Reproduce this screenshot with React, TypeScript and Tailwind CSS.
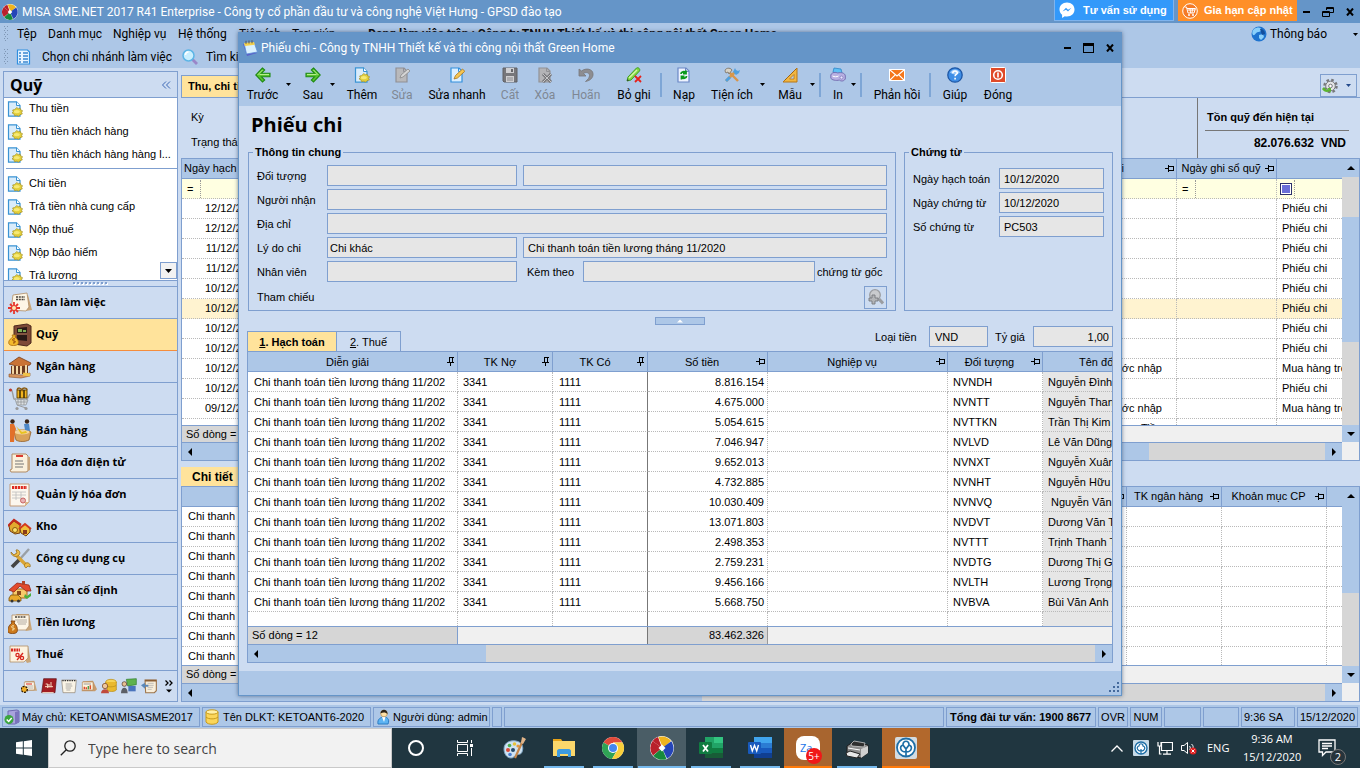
import React from "react";

const UI = "font-['Roboto','Noto_Sans',sans-serif]";
const HUMANIST = "font-['Open_Sans','Noto_Sans',sans-serif]";
const ARIAL = "font-['Liberation_Sans',Arial,sans-serif]";

/* ---------- small glyphs ---------- */

function MisaLogo({ className }: { className: string }) {
  return (
    <svg viewBox="0 0 24 24" className={className}>
      <circle cx="12" cy="12" r="12" fill="#fff" />
      <path d="M12 12 2.600 5A11.700 11.700 0 0 0 3 19.500Z" fill="#b9202b" />
      <path d="M12 12 2.600 5A11.700 11.700 0 0 1 8 1Z" fill="#b9202b" />
      <path d="M8.500 1A11.700 11.700 0 0 1 21 5L13 12Z" fill="#f0b41e" />
      <path d="M21.300 5.300A11.700 11.700 0 0 1 17 22.600L12 12Z" fill="#2545b8" />
      <path d="M16.500 22.900A11.700 11.700 0 0 1 3.200 19.800L12 12Z" fill="#178a3c" />
      <path d="m12 8.500 3.500 3.500-3.500 3.500L8.500 12Z" fill="#fff" />
    </svg>
  );
}

function DocCoin({ className = "size-4 shrink-0" }: { className?: string }) {
  return (
    <svg viewBox="0 0 16 16" className={className}>
      <path d="M1.500.8h8l3.500 3.700v10.700H1.500Z" fill="#d9ecfb" stroke="#3a93d3" strokeWidth="1.200" />
      <path d="M9.500.8v3.700H13" fill="#fff" stroke="#3a93d3" />
      <path d="m9.800 6.500 1.400 1.200 2-.5.5 1.700 1.900.8-1 1.600.7 1.600-2.300.8-1.500 1.500-1.700-.9-2.200.4-.5-1.700-2-1 1.200-1.500-.7-1.500 2.100-.5Z" fill="#e3cf3a" stroke="#a3902a" strokeWidth=".7" />
      <ellipse cx="9.800" cy="10.600" rx="3" ry="1.700" fill="#f6e976" />
    </svg>
  );
}

function PinSide() {
  return (
    <svg viewBox="0 0 9 8" className="h-2 w-[9px] shrink-0" fill="none" stroke="#000" shapeRendering="crispEdges">
      <path d="M0 3.500h3M3.500 0v7M3.500 1.500h5v4M3 5.500h6" />
    </svg>
  );
}

function PinDown() {
  return (
    <svg viewBox="0 0 8 9" className="h-[9px] w-2 shrink-0" fill="none" stroke="#000" shapeRendering="crispEdges">
      <path d="M2.500 0v5M2.500.5h4M5.500 0v5M0 5.500h7M3.500 5v4" />
    </svg>
  );
}

function Tri({ dir, className = "size-2" }: { dir: "up" | "down" | "left" | "right"; className?: string }) {
  const d = { up: "M0 6 4 2l4 4Z", down: "M0 2h8L4 6Z", left: "M6 0v8L2 4Z", right: "M2 0v8l4-4Z" }[dir];
  return (
    <svg viewBox="0 0 8 8" className={className} fill="currentColor">
      <path d={d} />
    </svg>
  );
}

const Close = ({ className = "size-2" }: { className?: string }) => (
  <svg viewBox="0 0 8 8" className={className} stroke="#000" strokeWidth="2">
    <path d="m1 0.500 6 7m0-7-6 7" />
  </svg>
);

/* ---------- navigation icons ---------- */

const paper = (
  <>
    <path d="m4 4 14-1 4 15-14 2H3Z" fill="#c9a679" />
    <path d="m3 4 14-1v15L3 19Z" fill="#fdf6e6" stroke="#b08d66" strokeWidth=".8" />
    <path d="M6 7h8M5.500 9.500h9M5.500 12h8" stroke="#6d6257" strokeDasharray="2 .8" />
  </>
);

const navIcons: Record<string, React.ReactNode> = {
  desk: (
    <>
      <path d="m7 3 13 1 4 15-6 1Z" fill="#c9a679" />
      <path d="m5 4 14-2 2 14-3 4L3 19Z" fill="#fdf6e6" stroke="#b08d66" strokeWidth=".8" />
      <path d="M8 6h9M8 8.500h9" stroke="#4a433c" strokeWidth="1.400" strokeDasharray="2 .8" />
      <g stroke="#e6342a" strokeWidth="1.800">
        <path d="M6 11v12M0 17h12M2 13l8 8m0-8-8 8" />
      </g>
      <circle cx="6" cy="17" r="2" fill="#ffe6b0" />
    </>
  ),
  safe: (
    <>
      <path d="m6 3 13-2 4 2v17l-4 3-13-2Z" fill="#7e4a37" stroke="#4c281c" />
      <path d="m9 5 10-1v14l-10-1Z" fill="#2a1a17" />
      <path d="m10 6 4 0v3h-4zM15 7h3v2h-3z" fill="#7fae55" />
      <path d="M9 11h10" stroke="#a06a50" strokeWidth="1.500" />
      <path d="M4 12h4l-1 2c3 2 4 5 3 7-1 2-8 2-9 0-1-3 1-5 4-7Z" fill="#f3b92c" stroke="#a96c10" strokeWidth=".8" />
      <path d="M7 16c-3-1-3 2-1 2s2 2-1 2" fill="none" stroke="#8a3c08" />
    </>
  ),
  bank: (
    <>
      <path d="M1 9 11 2l12 6-1 2-10 2Z" fill="#c97335" stroke="#7b3d16" strokeWidth=".8" />
      <path d="M3 11h17v8H3Z" fill="#6b3a20" />
      <path d="M5 11v8M9 11v8M13 11v8M18 10v8" stroke="#f4d9a5" strokeWidth="2" />
      <path d="m1 19 13 1 8-2v3l-9 2-12-1Z" fill="#d8955c" stroke="#8d5025" strokeWidth=".6" />
      <path d="m15 19 7 1" stroke="#f0c44a" strokeWidth="3" />
    </>
  ),
  cart: (
    <>
      <path d="M1 3c4-2 3 3 5 9l12 2 4-7" fill="none" stroke="#9c9c9c" strokeWidth="1.400" />
      <path d="M9 3h10v8H9Z" fill="#f2b51f" stroke="#6b4a06" />
      <path d="M12 3v8M16 3v8" stroke="#3b2b06" strokeWidth="1.500" />
      <path d="M9 3c1-3 4-2 5 0 1-3 5-2 5 0" fill="none" stroke="#8a5a10" strokeWidth="1.500" />
      <path d="m7 12 13 1-2 5H9Z" fill="#dde1e4" stroke="#8a8f94" strokeWidth=".7" />
      <path d="M10 12.500v5M13 12.500V18M16 13v5M8 15h11" stroke="#8a8f94" strokeWidth=".7" />
      <path d="m9 18 9 3" stroke="#9c9c9c" />
      <circle cx="9" cy="21.500" r="1.600" fill="#999" />
      <circle cx="18" cy="21.500" r="1.600" fill="#999" />
      <circle cx="2.500" cy="3" r="1.500" fill="#c0392b" />
    </>
  ),
  sell: (
    <>
      <path d="M6 13c4-3 12-3 17 0l-2 8c-4 2-10 2-13 0Z" fill="#d9a25a" stroke="#93602a" strokeWidth=".8" />
      <ellipse cx="14" cy="13" rx="7.500" ry="2.500" fill="#f4d59b" />
      <path d="m8 7 6 6 4-1 1 2-6 1Z" fill="#e8c21f" />
      <circle cx="4.500" cy="2.500" r="2.200" fill="#3a2417" />
      <path d="M2 5h4l2 5-1 3-1 10H2Z" fill="#e2702a" />
      <circle cx="19" cy="2.500" r="2.200" fill="#3a2417" />
      <path d="m16 5 5 0 1 7-5-1Z" fill="#4d87c7" />
    </>
  ),
  einvoice: (
    <>
      <path d="M4 3h14l2 2v15l-2 1H3l-1-2 2-1Z" fill="#fbf1dd" stroke="#b18a63" />
      <path d="M8 5h7" stroke="#d9261c" strokeWidth="1.800" />
      <path d="M7 10h8M7 13h9M7 16h8" stroke="#777" strokeWidth="1.200" />
      <path d="M20 6h2v13l-2 1Z" fill="#c9a57c" />
    </>
  ),
  invoice: (
    <>
      <path d="M2 1h19v18l-4 4H2Z" fill="#fcf7ee" stroke="#c49a77" />
      <path d="M4 4.500h15" stroke="#de2a20" strokeWidth="3" strokeDasharray="2.200 .7" />
      <path d="M4 9h14M4 12h14M4 15h9M8 9v8M13 9v8" stroke="#bdbdbd" strokeWidth=".8" />
      <circle cx="15" cy="17.500" r="2.500" fill="#e9b3b3" stroke="#c86363" />
      <path d="m17 23 4-4h-4Z" fill="#dcb98e" />
    </>
  ),
  store: (
    <>
      <path d="M1 11 6 6l6 4v8l-5 1-5-3Z" fill="#e2a92e" stroke="#77410f" />
      <path d="m0 11 6-6 7 5" fill="none" stroke="#c12c1d" strokeWidth="2.200" />
      <path d="m12 14 5-5 5 5v3l-4 4-5-3Z" fill="#efc03c" stroke="#77410f" />
      <path d="m11 14 6-5 6 5" fill="none" stroke="#d33a20" strokeWidth="2" />
      <circle cx="7" cy="15" r="2.500" fill="#fbe06a" stroke="#8a5b10" />
      <path d="M15 15h4v4h-4Z" fill="#8a3d18" />
    </>
  ),
  tools: (
    <>
      <path d="m4 20 8-8" stroke="#444" strokeWidth="3.800" />
      <path d="m12 12 9-10" stroke="#9aa0a6" strokeWidth="2.400" />
      <path d="m7 7 12 12" stroke="#d9a537" strokeWidth="3.400" />
      <path d="m3 5 3 3 3-2-1-3c3-1 5 3 3 5-3 3-8 1-8-3ZM18 16c3-1 5 2 4 4l-2-1-2 2c-2-1-2-4 0-5Z" fill="#f0bd48" stroke="#8d6414" strokeWidth=".7" />
    </>
  ),
  house: (
    <>
      <path d="M5 10h14v9H5Z" fill="#f7c96a" stroke="#a8691d" />
      <path d="m1 11 8-7 12 2 2 6-5 0-6-5-6 6Z" fill="#e34b2c" stroke="#96281a" strokeWidth=".8" />
      <path d="M14 2h3v4h-3Z" fill="#b54427" />
      <path d="M9 12h4v4H9Z" fill="#8c4a1c" />
      <path d="m1 19 2-3h7l3 3v3H1Z" fill="#e9a92c" stroke="#7b5410" strokeWidth=".8" />
      <circle cx="4" cy="22" r="1.500" fill="#333" />
      <circle cx="10.500" cy="22" r="1.500" fill="#333" />
      <path d="m17 15 2 2 4-3v3l-4 3-3-2Z" fill="#4cae3f" />
    </>
  ),
  salary: (
    <>
      <path d="m8 3 13 0 3 16-6 1Z" fill="#c9a679" />
      <path d="M4 4h17v11l-3 4H4Z" fill="#fdf6e6" stroke="#b08d66" strokeWidth=".8" />
      <path d="M7 6h11" stroke="#4a433c" strokeWidth="1.400" strokeDasharray="2 .8" />
      <path d="M7 9h12M9 11h10M10 13h8" stroke="#b3aca3" />
      <path d="M3 10h4l-1 2c3 2 4 6 3 9-1 2-8 2-9 0-1-3 1-7 4-9Z" fill="#cc7a1d" stroke="#7a3e09" strokeWidth=".8" />
      <path d="M6 15c-3-1-3 2-1 2s2 2-1 2" fill="none" stroke="#fff0b8" />
    </>
  ),
  tax: (
    <>
      <path d="M8 3h12l3 16-4 1Z" fill="#c9a679" />
      <path d="M2 3h18l0 12-4 4H2Z" fill="#fdf3e0" stroke="#b08d66" strokeWidth=".8" />
      <path d="M3 7h9" stroke="#d8261e" strokeWidth="2.800" strokeDasharray="2 .7" />
      <circle cx="9.500" cy="12" r="1.600" fill="none" stroke="#d8261e" strokeWidth="1.300" />
      <circle cx="14" cy="15" r="1.600" fill="none" stroke="#d8261e" strokeWidth="1.300" />
      <path d="m9 17 6-7" stroke="#d8261e" strokeWidth="1.300" />
    </>
  ),
};

const navItems: [string, string][] = [
  ["desk", "Bàn làm việc"],
  ["safe", "Quỹ"],
  ["bank", "Ngân hàng"],
  ["cart", "Mua hàng"],
  ["sell", "Bán hàng"],
  ["einvoice", "Hóa đơn điện tử"],
  ["invoice", "Quản lý hóa đơn"],
  ["store", "Kho"],
  ["tools", "Công cụ dụng cụ"],
  ["house", "Tài sản cố định"],
  ["salary", "Tiền lương"],
  ["tax", "Thuế"],
];

const trayIcons: [string, React.ReactNode][] = [
  ["Giá thành", <g key="a"><path d="m6 5 14-1 4 15H6Z" fill="#c9a679" /><path d="M5 6h15v12H5Z" fill="#fdf6e6" stroke="#b08d66" /><path d="M8 9h9" stroke="#d8261e" strokeWidth="2" strokeDasharray="2 1" /><path d="M9 12h9M10 15h8" stroke="#999" /><circle cx="5" cy="17" r="4.500" fill="#f3b029" stroke="#2b1a05" strokeWidth="2" strokeDasharray="3 1.500" /></g>],
  ["Tổng hợp", <g key="b"><path d="m4 1 19 0-2 21H1Z" fill="#a31d22" stroke="#5d0d12" /><path d="M6 13h12M7 9h3v6M12 9v5M15 6v8" stroke="#f6d9c0" strokeWidth="1.500" fill="none" /><path d="M2 22h17" stroke="#f7e6d1" strokeWidth="1.500" /></g>],
  ["Ngân sách", <g key="c"><path d="M1 3h22l-2 19H3Z" fill="#faf4e6" stroke="#8c8170" /><path d="M2 4h20" stroke="#333" strokeDasharray="2 1.500" strokeWidth="2" /><path d="M7 9h9M7 12h10M7 15h8M8 18h6" stroke="#8b8b8b" /></g>],
  ["Báo cáo", <g key="d"><path d="m3 5 15-1 6 13-3 3H1Z" fill="#c79a6c" /><path d="M2 6h16v12H2Z" fill="#fff4df" stroke="#b28d61" /><path d="M4 9h11" stroke="#999" strokeWidth="1.500" /><path d="M5 17v-4M8 17v-3M14 17v-6" stroke="#dd4a2a" strokeWidth="2.200" /><path d="M11 17v-5" stroke="#4fa04a" strokeWidth="2.200" /></g>],
  ["Tiền mặt", <g key="e"><ellipse cx="15" cy="6" rx="8" ry="4" fill="#f6d456" stroke="#b58914" /><path d="M7 6v5c3 3 12 3 16 0V6M9 13v5c3 3 11 3 14 0v-7" fill="#eab92e" stroke="#b58914" /><circle cx="6" cy="12" r="4" fill="#efc79b" stroke="#6b3918" /><path d="M0 23c0-8 12-8 12 0Z" fill="#c04a3c" /></g>],
  ["Khách hàng", <g key="f"><path d="m8 2 15-1v9l-13 2Z" fill="#5fb24d" stroke="#2d7b2c" /><path d="M11 12h11v8H11Z" fill="#4a74bd" /><circle cx="5" cy="9" r="3.500" fill="#e9bf93" stroke="#4b3120" /><path d="M0 23c0-11 10-11 10 0Z" fill="#5c5f66" /></g>],
  ["Kho vật tư", <g key="g"><path d="M6 3h17v16l-3 3H7Z" fill="#f8eedb" stroke="#9c7348" strokeWidth="1.600" /><path d="M10 8h9M10 11h9M10 14h8M10 17h6" stroke="#a7a7a7" /><path d="M6 4h17" stroke="#8b5f35" strokeWidth="2.500" /><path d="m0 11 6-4v3h5v3H6v3Z" fill="#5b87b8" /></g>],
];

/* ---------- dialog toolbar icons (16 x 16) ---------- */

const leftArrow = (
  <>
    <path d="M7.500 1 .8 8l6.700 7 2.200-2L6.500 9.800H15V6.200H6.500L9.700 3Z" fill="#59c42e" stroke="#1f8a14" strokeWidth="1.100" />
    <path d="M2.600 8 7.500 3M4.500 7.500h9.500" fill="none" stroke="#b6ee8c" />
  </>
);
const docBase = (fill: string, stroke: string) => (
  <>
    <path d="M2 1h8l3 3v11H2Z" fill={fill} stroke={stroke} strokeWidth="1.200" />
    <path d="M9.500 1v3.500H13" fill="none" stroke={stroke} />
  </>
);

const tbIcons: Record<string, React.ReactNode> = {
  prev: leftArrow,
  next: <g transform="matrix(-1 0 0 1 16 0)">{leftArrow}</g>,
  edit: <>{docBase("#b9b9bb", "#909096")}<path d="m6 11 1-3 7-6 2 2-7 6Z" fill="#d5d5d5" stroke="#8a8a8a" strokeWidth=".8" /></>,
  quick: <>{docBase("#dcefff", "#3390dd")}<path d="m5 12 1.500-3.500 7-6.500 2.300 2.300L8.500 11Z" fill="#f6c653" stroke="#a8731a" strokeWidth=".8" /></>,
  save: <><path d="M1 1h14v14H2l-1-1Z" fill="#77777b" stroke="#606064" /><path d="M4 1h8v5H4ZM4 9h8v6H4Z" fill="#cfcfd2" /><path d="M9 2h2v3H9Z" fill="#66666a" /><path d="M5 11h6M5 13h6" stroke="#8a8a8e" /></>,
  del: <>{docBase("#b4b4b7", "#929296")}<path d="m6 7 8 8m0-8-8 8" stroke="#77777b" strokeWidth="3" /><path d="m6 7 8 8m0-8-8 8" stroke="#c6c6c8" /></>,
  undo: <path d="M1 2v7h7L5.500 6.500c3-2 6-.5 6 2 0 2-1.500 4-4 6 5-1 8-4 7.500-8C14.500 2 8 .5 3.500 4Z" fill="#8d8d91" stroke="#77777b" strokeWidth=".8" />,
  unpost: <><path d="m1 14 1-4 8.500-9c2-1 4 1 3 3L5 13Z" fill="#83d840" stroke="#3d9e20" /><path d="m3 11 8-8" stroke="#d5f5a8" strokeWidth="1.500" /><path d="m1 14 .6-2L3 13.500Z" fill="#333" /><path d="m9 9 6 6m0-6-6 6" stroke="#e6201b" strokeWidth="1.800" /></>,
  load: <>{docBase("#eef3ff", "#6b87c6")}<path d="M5 7c0-2.500 3.500-3 5-1.200M10 3.500V6.500H7M10.500 9c0 2.500-3.500 3-5 1.200M5.500 12.500v-3h3" fill="none" stroke="#0a9a1d" strokeWidth="1.800" /></>,
  util: <><path d="m2 14 9-9" stroke="#d89b4a" strokeWidth="2.600" /><path d="m9 5 2-4 1 2 2 1 2-1-1 3-3 2Z" fill="#4fa0e0" /><path d="m5 5 9 9" stroke="#d8954a" strokeWidth="2.400" /><path d="M1 4c0-3 5-4 7-1l-3 4-1-2-2 1Z" fill="#d9d3c6" stroke="#877f72" /><path d="m1 13 4-4 2 2-4 4Z" fill="#4fa0e0" /></>,
  form: <><path d="M15 1v14H1Z" fill="#f2b640" stroke="#b77616" /><path d="M12 7.500V12H7.500Z" fill="#b9d0ea" stroke="#b77616" strokeWidth=".8" /><path d="m3 13 11-11" stroke="#8b560d" strokeDasharray="1 1" /></>,
  print: <><path d="m3 5 1-4 7 1 1 4-4 2Z" fill="#5fc0f4" stroke="#2f86c9" strokeWidth=".8" /><path d="M.8 8c1-3 5-3 7-2 3-1 7.500 0 7.500 3v3c-2 3-5 2-6 1-3 1-8 0-8.500-2Z" fill="#b8b0e2" stroke="#7169ae" strokeWidth=".9" /><path d="M2.500 9c2 1 4 1 6 0" stroke="#fff" fill="none" /><circle cx="11.500" cy="10.500" r="1.500" fill="#e9e6ff" stroke="#7169ae" strokeWidth=".6" /></>,
  mail: <><path d="M0 2h16v12H0Z" fill="#fff" /><path d="M1 3h14v10H1Z" fill="#f4761b" /><path d="m1 3 7 6 7-6M1 13l5.500-5.300M15 13 9.500 7.700" fill="none" stroke="#fff" strokeWidth="1.100" /></>,
  help: <><circle cx="8" cy="8" r="7.200" fill="#3f8ee6" stroke="#1d57a6" strokeWidth="1.300" /><path d="M3 5.500C5 1.500 11 1.500 13 5.500 10 8 6 8 3 5.500Z" fill="#9cc9fa" /><path d="M5.800 6.200c0-3 4.700-2.800 4.500-.2-.1 1.500-2.100 1.500-2.200 3.200M8.100 10.800v1.700" fill="none" stroke="#fff" strokeWidth="1.600" /></>,
  exit: <><rect x=".5" y=".5" width="15" height="15" rx="1" fill="#e04a28" stroke="#fff" /><circle cx="8" cy="8" r="4.300" fill="none" stroke="#fff" strokeWidth="1.600" /><path d="M8 5.500v5" stroke="#fff" strokeWidth="1.600" /></>,
};

type Tool = { w: string; icon: string; label: string; off?: boolean };

function ToolButton({ w, icon, label, off }: Tool) {
  return (
    <button type="button" disabled={off} className={`flex shrink-0 flex-col items-center gap-1 ${w} ${off ? "text-[#7f8794]" : "text-black"}`}>
      {icon === "add" ? <DocCoin /> : <svg viewBox="0 0 16 16" className="size-4">{tbIcons[icon]}</svg>}
      <span className="text-[12px] leading-4 whitespace-nowrap">{label}</span>
    </button>
  );
}

const ToolArrow = ({ className = "" }: { className?: string }) => (
  <button type="button" aria-label="Mở rộng" className={`w-[5px] shrink-0 ${className}`}>
    <svg viewBox="0 0 5 3" className="h-[3px] w-[5px]"><path d="M0 0h5L2.500 3Z" /></svg>
  </button>
);
const ToolSep = ({ className = "" }: { className?: string }) => <span className={`h-6 w-0.5 shrink-0 bg-[#7ea6d6] ${className}`} />;

/* ---------- scroll bars ---------- */

function HScroll({ thumb }: { thumb: string }) {
  return (
    <div className="flex h-[18px] shrink-0 items-stretch border-t border-[#7f9fcf] bg-[#d6d6d6]">
      <div className={`flex shrink-0 items-center bg-[#adc7e7] pl-1 ${thumb}`}><Tri dir="left" /></div>
      <div className="flex-1" />
      <div className="flex w-[17px] items-center justify-center bg-[#adc7e7]"><Tri dir="right" /></div>
    </div>
  );
}

function VScroll({ children }: { children: React.ReactNode }) {
  return (
    <div className="flex w-[17px] shrink-0 flex-col bg-[#d6d6d6]">
      <div className="flex h-[18px] shrink-0 items-center justify-center bg-[#adc7e7]"><Tri dir="up" /></div>
      {children}
      <div className="flex-1" />
      <div className="flex h-[17px] shrink-0 items-center justify-center bg-[#adc7e7]"><Tri dir="down" /></div>
      <div className="h-[18px] shrink-0 bg-[#f0f0f0]" />
    </div>
  );
}

/* ---------- tables ---------- */

const th = "h-5 overflow-hidden border-r border-b border-[#7f9fcf] bg-[#adc7e7] p-0 font-normal whitespace-nowrap";
const td = "h-5 overflow-hidden border-r border-b border-dotted border-[#b9b9b9] p-0 whitespace-nowrap";

function Head({ children, pin, className = "" }: { children?: React.ReactNode; pin?: "side" | "down"; className?: string }) {
  return (
    <th className={`${th} ${className}`}>
      <div className="flex items-center pr-0.5">
        <span className="flex-1 overflow-hidden text-center">{children}</span>
        {pin === "side" && <PinSide />}
        {pin === "down" && <PinDown />}
      </div>
    </th>
  );
}

const voucherRows: [string, string, string][] = [
  ["12/12/2020", "", "Phiếu chi"],
  ["12/12/2020", "", "Phiếu chi"],
  ["11/12/2020", "", "Phiếu chi"],
  ["11/12/2020", "", "Phiếu chi"],
  ["10/12/2020", "", "Phiếu chi"],
  ["10/12/2020", "", "Phiếu chi"],
  ["10/12/2020", "", "Phiếu chi"],
  ["10/12/2020", "", "Phiếu chi"],
  ["10/12/2020", "Mua hàng trong nước nhập", "Mua hàng trong nước"],
  ["10/12/2020", "", "Phiếu chi"],
  ["09/12/2020", "Mua hàng trong nước nhập", "Mua hàng trong nước"],
  ["", "Tiền", ""],
];

const lines: [string, string, string][] = [
  ["8.816.154", "NVNDH", "Nguyễn Đình"],
  ["4.675.000", "NVNTT", "Nguyễn Thanh"],
  ["5.054.615", "NVTTKN", "Trần Thị Kim"],
  ["7.046.947", "NVLVD", "Lê Văn Dũng"],
  ["9.652.013", "NVNXT", "Nguyễn Xuân"],
  ["4.732.885", "NVNHT", "Nguyễn Hữu"],
  ["10.030.409", "NVNVQ", "\u00a0Nguyễn Văn"],
  ["13.071.803", "NVDVT", "Dương Văn T"],
  ["2.498.353", "NVTTT", "Trịnh Thanh T"],
  ["2.759.231", "NVDTG", "Dương Thị Gi"],
  ["9.456.166", "NVLTH", "Lương Trọng"],
  ["5.668.750", "NVBVA", "Bùi Văn Anh"],
];

/* ---------- main window ---------- */

function TitleBar() {
  return (
    <header className="flex h-[23px] shrink-0 items-center bg-[#6595c8] pl-0.5 text-white">
      <MisaLogo className="size-4" />
      <h1 className="ml-1 flex-1 text-[12px] leading-4 whitespace-nowrap">
        MISA SME.NET 2017 R41 Enterprise - Công ty cổ phần đầu tư và công nghệ Việt Hưng - GPSD đào tạo
      </h1>
      <div className={`flex h-full items-start gap-1 text-[11px] font-bold ${ARIAL}`}>
        <button type="button" className="flex h-[21px] w-[120px] items-center gap-2 border border-t-0 border-[#7fb4ee] bg-[#3399fa] pl-1 whitespace-nowrap">
          <svg viewBox="0 0 16 16" className="size-4">
            <path d="M8 .5C3.500.500.500 3.700.500 7.500c0 2.200 1 4 2.600 5.300V16l2.700-1.700c.7.200 1.400.2 2.200.2 4.500 0 7.500-3.200 7.500-7S12.500.5 8 .5Z" fill="#fff" />
            <path d="m3.500 9.500 3.500-3.700 2 1.900 3.500-1.900L9 9.500 7 7.700Z" fill="#3399fa" />
          </svg>
          Tư vấn sử dụng
        </button>
        <button type="button" className="flex h-[21px] w-[119px] items-center gap-1.5 bg-[#ff8f28] pl-1 whitespace-nowrap">
          <svg viewBox="0 0 16 16" className="size-4">
            <circle cx="8" cy="8" r="7.300" fill="#f47a26" stroke="#fff" />
            <path d="M2.500 4h2l1.500 6h6l1.500-4.500H5M6 7h7M8 5.500l.5 4.500M10.500 5.500 10 10" fill="none" stroke="#fff" />
            <circle cx="7" cy="12" r="1" fill="#fff" /><circle cx="11" cy="12" r="1" fill="#fff" />
          </svg>
          Gia hạn cập nhật
        </button>
      </div>
      <div className="flex items-center gap-3 pr-1.5 pl-1.5">
        <button type="button" aria-label="Thu nhỏ" className="h-0.5 w-[7px] bg-black" />
        <button type="button" aria-label="Khôi phục">
          <svg viewBox="0 0 12 10" className="h-2.5 w-3" fill="none" stroke="#000"><path d="M4.500 3V.5h7v5H8M.5 4.500h7v5h-7ZM4 1.500h8M0 5.500h8" /></svg>
        </button>
        <button type="button" aria-label="Đóng cửa sổ"><Close /></button>
      </div>
    </header>
  );
}

const Grip = () => (
  <svg viewBox="0 0 4 16" className="h-4 w-1 shrink-0" fill="#7f97b5">
    {[0, 4, 8, 12].map((y) => <path key={y} d={`M0 ${y}h1v1H0zM3 ${y}h1v1H3zM1 ${y + 2}h1v1H1z`} />)}
  </svg>
);

function MenuBar() {
  return (
    <nav className="flex h-[22px] shrink-0 items-center bg-[#adc7e7] pl-1 text-[12px] leading-4 whitespace-nowrap">
      <Grip />
      <a href="#tep" className="ml-[9px] w-[31px]">Tệp</a>
      <a href="#danhmuc" className="w-[65px]">Danh mục</a>
      <a href="#nghiepvu" className="w-[65px]">Nghiệp vụ</a>
      <a href="#hethong" className="w-[61px]">Hệ thống</a>
      <a href="#tienich" className="w-[53px]">Tiện ích</a>
      <a href="#trogiup" className="w-[76px]">Trợ giúp</a>
      <span className="flex-1 font-bold">Đang làm việc trên : Công ty TNHH Thiết kế và thi công nội thất Green Home</span>
      <a href="#thongbao" className="flex items-center gap-[3px]">
        <svg viewBox="0 0 16 16" className="size-4">
          <circle cx="8" cy="8" r="7.500" fill="#1f74cf" />
          <path d="M3 3c3-2 6-2 7 0s-1 3-3 3-3 4-5 3C.500 7 1.500 4.500 3 3ZM8 9l4-1 1 3-3 3-2-2Z" fill="#8ad0fb" />
          <path d="M9 3c3 0 5 2 5 5l-3 1Z" fill="#124f9e" />
        </svg>
        Thông báo
      </a>
      <button type="button" aria-label="Thêm thông báo" className="ml-[26px] pr-0.5"><svg viewBox="0 0 5 3" className="h-[3px] w-[5px]"><path d="M0 0h5L2.500 3Z" /></svg></button>
    </nav>
  );
}

function ToolStrip() {
  return (
    <div className="flex h-[23px] shrink-0 items-center bg-[#adc7e7] pl-1 text-[12px] leading-4 whitespace-nowrap">
      <Grip />
      <button type="button" className="ml-2 flex w-[166px] items-center gap-[10px]">
        <svg viewBox="0 0 16 16" className="size-4">
          <path d="M1.500 1h10l2 2v12h-12Z" fill="#eaf5ff" stroke="#2f8fe0" strokeWidth="1.200" />
          <path d="M3 4h2M3 7h2M3 10h2M3 13h2M7 4h5M7 7h5M7 10h5M7 13h5" stroke="#3b87d0" strokeWidth="1.300" />
        </svg>
        Chọn chi nhánh làm việc
      </button>
      <button type="button" className="flex items-center gap-2">
        <svg viewBox="0 0 16 16" className="size-4">
          <path d="m10 10 5 5" stroke="#9a86c8" strokeWidth="2.800" />
          <circle cx="6.500" cy="6.500" r="5.500" fill="#c9efff" stroke="#5cb5e6" strokeWidth="1.500" />
          <path d="M3.500 6c0-2 1.500-3 3-3" fill="none" stroke="#fff" strokeWidth="1.500" />
        </svg>
        Tìm kiếm
      </button>
    </div>
  );
}

function SideList({ items }: { items: string[] }) {
  return (
    <ul>
      {items.map((t) => (
        <li key={t} className="h-[23px]">
          <a href="#muc" className="flex h-[21px] items-center gap-[6px] pl-[3px] whitespace-nowrap"><DocCoin />{t}</a>
        </li>
      ))}
    </ul>
  );
}

function Sidebar() {
  return (
    <aside className="my-[3px] mr-[3px] ml-[3px] flex w-[175px] shrink-0 flex-col border border-[#7f9fcf] bg-[#cddcf1]">
      <div className="flex h-[26px] shrink-0 items-center justify-between border-b border-[#7f9fcf] pr-1.5 pl-1.5">
        <h2 className={`text-[16px] leading-5 font-bold ${HUMANIST}`}>Quỹ</h2>
        <button type="button" aria-label="Thu gọn">
          <svg viewBox="0 0 9 8" className="h-2 w-[9px]" fill="none" stroke="#3b67b5"><path d="M4 .5.500 4 4 7.500M8 .5 4.500 4 8 7.500" /></svg>
        </button>
      </div>
      <div className={`relative h-[182px] shrink-0 overflow-hidden bg-white text-[11px] ${ARIAL}`}>
        <SideList items={["Thu tiền", "Thu tiền khách hàng", "Thu tiền khách hàng hàng l..."]} />
        <div className="mt-px mb-1 ml-0.5 border-b border-[#7f9fcf]" />
        <SideList items={["Chi tiền", "Trả tiền nhà cung cấp", "Nộp thuế", "Nộp bảo hiểm", "Trả lương"]} />
        <button type="button" aria-label="Cuộn xuống" className="absolute right-0 bottom-px flex size-[17px] items-center justify-center border border-[#7f9fcf] bg-[#f2f2f2]">
          <svg viewBox="0 0 7 4" className="h-1 w-[7px]"><path d="M0 0h7L3.500 4Z" /></svg>
        </button>
      </div>
      <div className="flex h-[7px] shrink-0 items-center justify-center border-y border-[#7f9fcf]">
        <svg viewBox="0 0 36 3" className="h-[3px] w-9"><path d="M1 2h35" stroke="#fff" strokeWidth="2" strokeDasharray="2 2" /><path d="M0 1h36" stroke="#7f9fcf" strokeWidth="2" strokeDasharray="2 2" /></svg>
      </div>
      <ul className={`text-[11px] font-bold ${HUMANIST}`}>
        {navItems.map(([k, t]) => (
          <li key={k}>
            <a href={`#${k}`} className={k === "safe" ? "flex h-8 items-center gap-1 border-b border-[#f58d3d] bg-[#ffe39b] pl-1" : "flex h-8 items-center gap-1 border-b border-[#7f9fcf] pl-1"}>
              <svg viewBox="0 0 24 24" className="size-6">{navIcons[k]}</svg>
              {t}
            </a>
          </li>
        ))}
      </ul>
      <div className="flex flex-1 items-center gap-1 pl-[17px]">
        {trayIcons.map(([t, g]) => (
          <button key={t} type="button" aria-label={t} className="size-4"><svg viewBox="0 0 24 24" className="size-4">{g}</svg></button>
        ))}
        <button type="button" aria-label="Mục khác" className="ml-1">
          <svg viewBox="0 0 8 13" className="h-[13px] w-2"><path d="m.5.500 2.500 2.500L.500 5.500M4.500.500 7 3 4.500 5.500" fill="none" stroke="#000" strokeWidth="1.300" /><path d="M1 9.500h6L4 12.500Z" /></svg>
        </button>
      </div>
    </aside>
  );
}

function FilterPanel() {
  return (
    <>
      <div className="mt-[7px] flex h-[23px] shrink-0 items-end justify-between border-b border-[#7f9fcf]">
        <button type="button" className="h-[22px] w-[120px] overflow-hidden border border-b-0 border-[#7f9fcf] bg-[#ffe39b] pl-1.5 text-left text-[11px] font-bold whitespace-nowrap">Thu, chi tiền</button>
        <button type="button" aria-label="Tùy chỉnh" className="mr-[3px] flex h-[23px] w-[37px] items-center gap-2 border border-[#7f9fcf] pl-px text-[#234a8c]">
          <svg viewBox="0 0 16 16" className="size-4">
            <circle cx="8.500" cy="8" r="6" fill="none" stroke="#77797c" strokeWidth="2.500" strokeDasharray="2.500 2.212" />
            <circle cx="8.500" cy="8" r="4.800" fill="#e5e6e8" stroke="#77797c" />
            <circle cx="8.500" cy="8" r="1.800" fill="#fff" stroke="#77797c" />
            <path d="M0 11c2 3 5 4 8 2l1 2v-5H5l1.500 1.500C5 12 3 11.500 2 9Z" fill="#5cb531" />
          </svg>
          <svg viewBox="0 0 5 3" className="h-[3px] w-[5px]" fill="currentColor"><path d="M0 0h5L2.500 3Z" /></svg>
        </button>
      </div>
      <div className={`flex h-[60px] shrink-0 justify-between text-[11px] leading-4 ${ARIAL}`}>
        <div className="pt-[11px] pl-2.5">
          <p className="mb-[9px]">Kỳ</p>
          <p>Trạng thái</p>
        </div>
        <div className="w-[163px] border-l border-[#777] pt-[11px] pr-[11px] pl-[7px] font-bold">
          <p className="border-b border-[#777] pb-[5px] pl-0.5 leading-4">Tồn quỹ đến hiện tại</p>
          <p className="pt-1 pr-[3px] text-right text-[12px] leading-4 whitespace-pre">82.076.632  VND</p>
        </div>
      </div>
    </>
  );
}

function VoucherGrid() {
  return (
    <section className="flex h-[303px] shrink-0 border border-[#7f9fcf]">
      <div className="flex min-w-0 flex-1 flex-col">
        <div className="min-h-0 flex-1 overflow-hidden bg-white">
          <table className="w-full table-fixed border-separate border-spacing-0">
            <colgroup><col className="w-[84px]" /><col /><col className="w-[100px]" /><col className="w-[65px]" /></colgroup>
            <thead>
              <tr>
                <Head>Ngày hạch toán</Head>
                <th className={th}><div className="flex items-center justify-between pr-0.5"><span /><span className="flex items-center gap-[41px]">Lý do thu/chi<PinSide /></span></div></th>
                <Head pin="side">Ngày ghi sổ quỹ</Head>
                <th className={`${th} border-r-0`} aria-label="Loại chứng từ" />
              </tr>
            </thead>
            <tbody>
              <tr className="bg-[#ffffe1]">
                <td className={`${td} pl-[5px]`}><span className="inline-block w-[14px] border-r border-dotted border-[#999] leading-[18px]">=</span></td>
                <td className={td} />
                <td className={`${td} pl-[5px]`}><span className="inline-block w-[14px] border-r border-dotted border-[#999] leading-[18px]">=</span></td>
                <td className={`${td} border-r-0 pl-[3px]`}>
                  <span className="flex h-[18px] w-[15px] items-center border-r border-dotted border-[#999]">
                    <span className="flex size-3 items-center justify-center border border-[#2b2f6b] bg-white"><span className="size-2 bg-[#6a6ed8]" /></span>
                  </span>
                </td>
              </tr>
              {voucherRows.map(([d, r, k], i) => (
                <tr key={i} className={i === 5 ? "bg-[#fff3d0]" : ""}>
                  <td className={`${td} pr-[5px] text-right`}>{d}</td>
                  <td className={`${td} pr-3.5 text-right`}>{r}</td>
                  <td className={td} />
                  <td className={`${td} border-r-0 pl-[5px]`}>{k}</td>
                </tr>
              ))}
            </tbody>
          </table>
        </div>
        <div className="flex h-[17px] shrink-0 border-t border-[#7f9fcf] bg-[#f0f0f0]"><span className="w-[84px] bg-[#d6d6d6] pl-1 leading-4">Số dòng = 54</span></div>
        <HScroll thumb="w-5/6" />
      </div>
      <VScroll><div className="h-10 shrink-0" /><div className="h-[125px] shrink-0 bg-[#adc7e7]" /></VScroll>
    </section>
  );
}

function DetailGrid() {
  return (
    <>
      <button type="button" className="mt-1.5 h-[19px] w-[90px] shrink-0 bg-[#ffe39b] pl-[11px] text-left text-[12px] font-bold">Chi tiết</button>
      <section className="mb-[3px] flex min-h-0 flex-1 border border-[#7f9fcf]">
        <div className="flex min-w-0 flex-1 flex-col">
          <div className="min-h-0 flex-1 overflow-hidden bg-white">
            <table className="w-full table-fixed border-separate border-spacing-0">
              <colgroup><col className="w-[190px]" /><col /><col className="w-[95px]" /><col className="w-[105px]" /><col className="w-[15px]" /></colgroup>
              <thead>
                <tr>
                  <Head>Diễn giải</Head>
                  <Head pin="side" />
                  <Head pin="side">TK ngân hàng</Head>
                  <Head pin="side">Khoản mục CP</Head>
                  <th className={`${th} border-r-0`} aria-label="Khác" />
                </tr>
              </thead>
              <tbody>
                {[0, 1, 2, 3, 4, 5, 6, 7].map((i) => (
                  <tr key={i}>
                    <td className={`${td} pl-1.5`}>Chi thanh toán tiền lương</td>
                    <td className={td} /><td className={td} /><td className={td} /><td className={`${td} border-r-0`} />
                  </tr>
                ))}
              </tbody>
            </table>
          </div>
          <div className="flex h-[18px] shrink-0 border-t border-[#7f9fcf] bg-[#f0f0f0]"><span className="w-[84px] bg-[#d6d6d6] pl-1 leading-4">Số dòng = 12</span></div>
          <HScroll thumb="w-[520px]" />
        </div>
        <VScroll><div className="h-[88px] shrink-0 bg-[#adc7e7]" /></VScroll>
      </section>
    </>
  );
}

function StatusBar() {
  const cell = "flex h-5 shrink-0 items-center border border-[#7f9fcf] whitespace-nowrap";
  return (
    <footer className={`flex h-[23px] shrink-0 items-center gap-0.5 bg-[#adc7e7] px-0.5 text-[11px] leading-4 ${ARIAL}`}>
      <div className={`${cell} w-[198px] gap-0.5 pl-px`}>
        <svg viewBox="0 0 16 16" className="size-4 shrink-0"><path d="m4 2 9-1 2 1v11l-4 2H4Z" fill="#a9a3dd" stroke="#6f69b3" /><path d="m11 3 4-1v11l-4 2Z" fill="#7a74bd" /><circle cx="5" cy="10.500" r="4.500" fill="#3aa63e" /><path d="m2.700 10.500 2 2 3-3.500" fill="none" stroke="#fff" strokeWidth="1.500" /></svg>
        Máy chủ: KETOAN\MISASME2017
      </div>
      <div className={`${cell} w-[169px] gap-1 pl-0.5`}>
        <svg viewBox="0 0 14 16" className="h-4 w-3.5 shrink-0"><path d="M1 3v10c2 3 10 3 12 0V3Z" fill="#fbd65a" stroke="#c79a1c" /><ellipse cx="7" cy="3" rx="6" ry="2.200" fill="#fff0a8" stroke="#c79a1c" /><path d="M1 8c2 2.500 10 2.500 12 0" fill="none" stroke="#c79a1c" /></svg>
        Tên DLKT: KETOANT6-2020
      </div>
      <div className={`${cell} w-[117px] gap-0.5 pl-px`}>
        <svg viewBox="0 0 16 16" className="size-4 shrink-0"><path d="M3 15c-1-5 3-7 6-7s6 2 4 7Z" fill="#5cb3f2" stroke="#2b7cc4" /><path d="m7 8 2 5 1.500-5Z" fill="#fff" /><circle cx="9" cy="4.500" r="3.300" fill="#ffe0a6" stroke="#b88a3f" strokeWidth=".6" /><path d="M5.500 4.500c0-5 7.500-5 7 1C11 3 8 3 5.500 4.500Z" fill="#2d2318" /></svg>
        Người dùng: admin
      </div>
      <div className={`${cell} w-2.5`} />
      <div className={`${cell} flex-1`} />
      <div className={`${cell} w-[150px] pl-[3px] font-bold`}>Tổng đài tư vấn: 1900 8677</div>
      <div className={`${cell} w-[30px] justify-center`}>OVR</div>
      <div className={`${cell} w-8 justify-center`}>NUM</div>
      <div className={`${cell} w-[37px]`} />
      <div className={`${cell} w-9`} />
      <div className={`${cell} w-[54px] pl-0.5`}>9:36 SA</div>
      <div className={`${cell} w-[61px] justify-center`}>15/12/2020</div>
    </footer>
  );
}

/* ---------- voucher dialog ---------- */

function Field({ id, label, value = "", className, labelClass = "" }: { id: string; label?: string; value?: string; className: string; labelClass?: string }) {
  return (
    <>
      {label && <label htmlFor={id} className={`shrink-0 whitespace-nowrap ${labelClass}`}>{label}</label>}
      <input id={id} aria-label={label ? undefined : "Chi tiết"} readOnly defaultValue={value} className={`h-[21px] min-w-0 border border-[#7f9fcf] bg-[#e6e6e6] ${className}`} />
    </>
  );
}

function GeneralInfo() {
  const row = "flex h-[21px] items-center";
  return (
    <fieldset className="h-[164px] min-w-0 flex-1 border border-[#7f9fcf] px-2 leading-4">
      <legend className="-ml-1 px-0.5 leading-[10px] font-bold">Thông tin chung</legend>
      <div className="flex flex-col gap-[3px] pt-2">
        <div className={row}>
          <Field id="doituong" label="Đối tượng" labelClass="w-[70px]" className="w-[190px]" />
          <Field id="tendoituong" className="ml-1.5 flex-1" />
        </div>
        <div className={row}><Field id="nguoinhan" label="Người nhận" labelClass="w-[70px]" className="flex-1" /></div>
        <div className={row}><Field id="diachi" label="Địa chỉ" labelClass="w-[70px]" className="flex-1" /></div>
        <div className={row}>
          <Field id="lydo" label="Lý do chi" value="Chi khác" labelClass="w-[70px]" className="w-[190px] pl-0.5" />
          <Field id="lydochitiet" value="Chi thanh toán tiền lương tháng 11/2020" className="ml-1.5 flex-1 pl-1" />
        </div>
        <div className={row}>
          <Field id="nhanvien" label="Nhân viên" labelClass="w-[70px]" className="w-[190px]" />
          <Field id="kemtheo" label="Kèm theo" labelClass="ml-2.5 w-14" className="flex-1" />
          <span className="w-[72px] shrink-0 pl-0.5 whitespace-nowrap">chứng từ gốc</span>
        </div>
        <div className="flex h-6 items-center justify-between">
          <span>Tham chiếu</span>
          <button type="button" aria-label="Tìm tham chiếu" className="flex size-[23px] items-center justify-center border border-[#7f9fcf]">
            <svg viewBox="0 0 16 16" className="size-4"><circle cx="7" cy="6" r="5.300" fill="#c9cbce" stroke="#9b9da1" strokeWidth="1.300" /><path d="m11 10 4 4.500" stroke="#9b9da1" strokeWidth="3" /><path d="M4 6h3v3h3v3H7v3H4v-3H1V9h3Z" fill="#b3b5b8" stroke="#77797d" strokeWidth=".9" /></svg>
          </button>
        </div>
      </div>
    </fieldset>
  );
}

function VoucherInfo() {
  return (
    <fieldset className="h-[164px] w-[208px] shrink-0 border border-[#7f9fcf] px-2 leading-4">
      <legend className="-ml-1 px-0.5 leading-[10px] font-bold">Chứng từ</legend>
      <div className="flex flex-col gap-[3px] pt-[11px]">
        {[["hachtoan", "Ngày hạch toán", "10/12/2020"], ["ngayct", "Ngày chứng từ", "10/12/2020"], ["soct", "Số chứng từ", "PC503"]].map(([id, l, v]) => (
          <div key={id} className="flex h-[21px] items-center"><Field id={id} label={l} value={v} labelClass="w-[86px]" className="w-[105px] pl-1" /></div>
        ))}
      </div>
    </fieldset>
  );
}

function EntryGrid() {
  const last = "border-r-0 pl-[5px] bg-[#e6e6e6]";
  return (
    <section className="flex min-h-0 flex-1 flex-col border border-[#7f9fcf]">
      <div className="min-h-0 flex-1 overflow-hidden bg-white">
        <table className="w-full table-fixed border-separate border-spacing-0">
          <colgroup>
            <col className="w-[210px]" /><col className="w-[95px]" /><col className="w-[95px]" /><col className="w-[120px]" /><col /><col className="w-[95px]" /><col className="w-[69px]" />
          </colgroup>
          <thead>
            <tr>
              <Head pin="down">Diễn giải</Head>
              <Head pin="down">TK Nợ</Head>
              <Head pin="down">TK Có</Head>
              <Head pin="side">Số tiền</Head>
              <Head pin="side">Nghiệp vụ</Head>
              <Head pin="side">Đối tượng</Head>
              <th className={`${th} border-r-0 pl-9 text-left`}>Tên đối tượng</th>
            </tr>
          </thead>
          <tbody>
            {lines.map(([amt, code, name]) => (
              <tr key={code}>
                <td className={`${td} pl-1.5`}>Chi thanh toán tiền lương tháng 11/202</td>
                <td className={`${td} pl-[5px]`}>3341</td>
                <td className={`${td} border-r-[#777] pl-1.5 [border-right-style:solid]`}>1111</td>
                <td className={`${td} pr-[3px] text-right`}>{amt}</td>
                <td className={td} />
                <td className={`${td} pl-[5px]`}>{code}</td>
                <td className={`${td} ${last}`}>{name}</td>
              </tr>
            ))}
            <tr>
              <td className={td} /><td className={td} /><td className={`${td} border-r-[#777] [border-right-style:solid]`} /><td className={td} /><td className={td} /><td className={td} /><td className={`${td} ${last}`} />
            </tr>
          </tbody>
        </table>
      </div>
      <div className="flex h-[18px] shrink-0 border-t border-[#7f9fcf] bg-[#f0f0f0] leading-[17px]">
        <span className="w-[210px] border-r border-[#7f9fcf] bg-[#d6d6d6] pl-1">Số dòng = 12</span>
        <span className="w-[190px] border-r border-[#777]" />
        <span className="w-[120px] border-r border-[#999] bg-[#d6d6d6] pr-[3px] text-right">83.462.326</span>
      </div>
      <HScroll thumb="w-[238px]" />
    </section>
  );
}

function VoucherDialog() {
  return (
    <div role="dialog" aria-label="Phiếu chi" className="absolute inset-x-[238px] top-8 bottom-[72px] flex flex-col border border-[#6595c8] bg-[#cddcf1] shadow-[0_0_4px_rgba(60,80,110,0.7)]">
      <div className="flex h-[30px] shrink-0 items-center bg-[#6595c8] pr-[7px] pl-[3px] text-white">
        <svg viewBox="0 0 16 16" className="size-4 shrink-0">
          <path d="m1 4 9-2 5 11-10 3Z" fill="#5a5fc8" />
          <path d="m2 3 10-1 3.500 10-11 2Z" fill="#d9f1ff" stroke="#5a8fd6" strokeWidth=".8" />
          <path d="M2 3 12 2l.9 2.800-10 1.200Z" fill="#f3d04a" />
          <path d="M4 .800v3M7 .500v3M10 .300v3" stroke="#555" />
        </svg>
        <h2 className="ml-[3px] flex-1 text-[12px] leading-4 whitespace-nowrap">Phiếu chi - Công ty TNHH Thiết kế và thi công nội thất Green Home</h2>
        <div className="flex items-center gap-3">
          <button type="button" aria-label="Thu nhỏ" className="h-0.5 w-[7px] bg-black" />
          <button type="button" aria-label="Phóng to" className="h-2.5 w-[11px] border border-t-[3px] border-black" />
          <button type="button" aria-label="Đóng hộp thoại"><Close /></button>
        </div>
      </div>
      <div className="flex h-[43px] shrink-0 items-center bg-[#adc7e7]">
        <ToolButton w="w-[47px]" icon="prev" label="Trước" />
        <ToolArrow />
        <ToolButton w="ml-[5px] w-[34px]" icon="next" label="Sau" />
        <ToolArrow />
        <ToolButton w="w-[54px]" icon="add" label="Thêm" />
        <ToolButton w="w-[26px]" icon="edit" label="Sửa" off />
        <ToolButton w="w-[84px]" icon="quick" label="Sửa nhanh" />
        <ToolButton w="w-[22px]" icon="save" label="Cất" off />
        <ToolButton w="w-[48px]" icon="del" label="Xóa" off />
        <ToolButton w="w-[34px]" icon="undo" label="Hoãn" off />
        <ToolButton w="ml-[5px] w-[52px]" icon="unpost" label="Bỏ ghi" />
        <ToolSep />
        <ToolButton w="w-[44px]" icon="load" label="Nạp" />
        <ToolButton w="w-[52px]" icon="util" label="Tiện ích" />
        <ToolArrow className="ml-0.5" />
        <ToolButton w="ml-[5px] w-[40px]" icon="form" label="Mẫu" />
        <ToolArrow />
        <ToolSep className="ml-1" />
        <ToolButton w="ml-1 w-[26px]" icon="print" label="In" />
        <ToolArrow />
        <ToolSep className="ml-1" />
        <ToolButton w="ml-[3px] w-[64px]" icon="mail" label="Phản hồi" />
        <ToolSep />
        <ToolButton w="w-[48px]" icon="help" label="Giúp" />
        <ToolButton w="w-[38px]" icon="exit" label="Đóng" />
      </div>
      <div className={`flex min-h-0 flex-1 flex-col px-2 text-[11px] leading-4 ${ARIAL}`}>
        <h3 className={`mt-1.5 mb-[9px] pl-1 text-[20px] leading-[26px] font-bold ${HUMANIST}`}>Phiếu chi</h3>
        <div className="ml-px flex items-start gap-2">
          <GeneralInfo />
          <VoucherInfo />
        </div>
        <div className="mt-1.5 grid h-[34px] shrink-0 grid-cols-[1fr_50px_1fr] items-end">
          <div className="flex h-5 items-stretch" role="tablist">
            <button type="button" role="tab" aria-selected="true" className="w-[90px] border border-b-0 border-[#7f9fcf] bg-[#ffe39b] font-bold"><u>1</u>. Hạch toán</button>
            <button type="button" role="tab" aria-selected="false" className="w-16 border border-b-0 border-l-0 border-[#7f9fcf]"><u>2</u>. Thuế</button>
          </div>
          <button type="button" aria-label="Thu gọn phần chung" className="flex h-2 items-center justify-center self-start border border-[#7f9fcf] bg-[#adc7e7] text-white"><Tri dir="up" className="h-1.5 w-[6px]" /></button>
          <div className="mb-1 flex items-center justify-end">
            <Field id="loaitien" label="Loại tiền" value="VND" labelClass="w-[54px]" className="w-[59px] pl-[5px]" />
            <Field id="tygia" label="Tỷ giá" value="1,00" labelClass="ml-[7px] w-[38px]" className="w-20 pr-[3px] text-right" />
          </div>
        </div>
        <EntryGrid />
      </div>
      <div className="mt-2 flex h-6 shrink-0 items-end justify-end bg-[#adc7e7] p-0.5">
        <svg viewBox="0 0 11 11" className="size-[11px]" fill="#44699c"><path d="M9 0h2v2H9zM9 4h2v2H9zM9 8h2v2H9zM5 4h2v2H5zM5 8h2v2H5zM1 8h2v2H1z" /></svg>
      </div>
    </div>
  );
}

/* ---------- Windows taskbar ---------- */

const apps: { name: string; slot: string; bar: string; icon: React.ReactNode }[] = [
  { name: "Paint", slot: "w-[50px]", bar: "", icon: <svg viewBox="0 0 24 24" className="size-6"><path d="M2 13C2 6 9 4 14 5c6 1 8 6 6 11-1 3-4 2-6 3s-2 3-5 3c-4 0-7-4-7-9Z" fill="#cfe3f2" stroke="#7fa5c4" /><circle cx="6" cy="14" r="2" fill="#d84a3a" /><circle cx="7.500" cy="9.500" r="1.800" fill="#4cae50" /><circle cx="12.500" cy="8" r="1.800" fill="#e8c23a" /><circle cx="16" cy="10" r="1.600" fill="#e89a3a" /><circle cx="11" cy="14" r="2" fill="#234a6b" /><circle cx="8" cy="18.500" r="1.800" fill="#4a7ed0" /><path d="M22 2 13 22" stroke="#c4864a" strokeWidth="2.200" /><path d="m20 1 4 2-3 5-2-1Z" fill="#e0b58a" /></svg> },
  { name: "File Explorer", slot: "w-[49px]", bar: "bg-[#76b9ed] w-10", icon: <svg viewBox="0 0 24 24" className="size-6"><path d="M1 3h8l2 3H1Z" fill="#e8a317" /><path d="M1 5h22v15H1Z" fill="#fbd76b" /><path d="M5 21v-6c0-1 1-2 2-2h10c1 0 2 1 2 2v6h-3v-3H8v3Z" fill="#3d9be0" /></svg> },
  { name: "Chrome", slot: "w-[49px]", bar: "bg-[#76b9ed] w-10", icon: <svg viewBox="0 0 24 24" className="size-6"><circle cx="12" cy="12" r="11" fill="#fff" /><path d="M12 12 2.500 6.500A11 11 0 0 1 21.500 6.500H12Z" fill="#e04a3a" /><path d="M12 12 2.500 6.500A11 11 0 0 0 11 23l5-8.700Z" fill="#2fa355" /><path d="M21.500 6.500A11 11 0 0 1 11 23l5.500-9L13 6.500Z" fill="#f9cf3b" /><circle cx="12" cy="12" r="5" fill="#fff" /><circle cx="12" cy="12" r="4" fill="#4587f0" /></svg> },
  { name: "MISA", slot: "w-[49px]", bar: "bg-[#76b9ed] w-12", icon: <MisaLogo className="size-6" /> },
  { name: "Excel", slot: "w-[49px]", bar: "bg-[#76b9ed] w-10", icon: <svg viewBox="0 0 24 24" className="size-6"><path d="M6 1h9v11H6Z" fill="#21a366" /><path d="M15 1h9v6h-9Z" fill="#33c481" /><path d="M15 7h9v5h-9Z" fill="#21a366" /><path d="M6 12h9v5H6Z" fill="#107c41" /><path d="M15 12h9v5h-9Z" fill="#107c41" /><path d="M6 17h18v5H6Z" fill="#185c37" /><rect y="6" width="13" height="12" rx="1" fill="#107c41" /><path d="m4 9 5 6.500M9 9l-5 6.500" stroke="#fff" strokeWidth="1.800" /></svg> },
  { name: "Word", slot: "w-[49px]", bar: "bg-[#76b9ed] w-10", icon: <svg viewBox="0 0 24 24" className="size-6"><path d="M6 1h18v6H6Z" fill="#41a5ee" /><path d="M6 7h18v5H6Z" fill="#2b7cd3" /><path d="M6 12h18v5H6Z" fill="#185abd" /><path d="M6 17h18v5H6Z" fill="#103f91" /><rect y="6" width="13" height="12" rx="1" fill="#185abd" /><path d="m2.500 9 1.800 6 2.200-5.500L8.700 15l1.800-6" fill="none" stroke="#fff" strokeWidth="1.400" /></svg> },
  { name: "Zalo", slot: "w-[48px] bg-[#a8652f]", bar: "bg-[#ff7a0a] w-12", icon: <span className="relative flex size-6 items-center overflow-visible rounded-lg bg-white pl-1 text-[11px] text-[#1a73e8]">Za<span className="absolute -right-0.5 -bottom-1 flex size-4 items-center justify-center rounded-full bg-[#f01818] text-[10px] text-white">5+</span></span> },
  { name: "Máy in", slot: "w-[50px]", bar: "bg-[#76b9ed] w-10", icon: <svg viewBox="0 0 24 24" className="size-6"><path d="m2 10 6-4 15 3v8l-7 5-14-3Z" fill="#8b8b8b" stroke="#1d1d1d" /><path d="m6 8 3-3 11 2-1 4-12-1Z" fill="#2f2f2f" stroke="#ddd" strokeWidth=".7" /><path d="m16 13 7-3v7l-7 5Z" fill="#d0d0d0" /><path d="m1 17 4-2 10 3-3 4-10-2Z" fill="#e8e8e8" stroke="#222" /><path d="m3 12 12 2" stroke="#fff" /></svg> },
  { name: "VietinBank", slot: "w-[48px] bg-[#b2682c]", bar: "bg-[#ff7a0a] w-12", icon: <svg viewBox="0 0 24 24" className="size-6"><rect x="1" y="1" width="22" height="22" rx="2" fill="#d3dbe0" /><circle cx="12" cy="11.500" r="9" fill="#fff" stroke="#1d6ea6" strokeWidth="1.800" /><path d="M12 21v-8M12 16c-6 0-7-6-3-7 0-5 6-5 6 0 4 1 3 7-3 7M9 9l3 4 3-4" fill="none" stroke="#1d6ea6" strokeWidth="1.700" /></svg> },
];

function Taskbar() {
  return (
    <footer className={`flex h-10 shrink-0 items-center bg-[#203640] text-white ${HUMANIST}`}>
      <button type="button" aria-label="Start" className="flex w-12 items-center justify-center">
        <svg viewBox="0 0 16 16" className="size-4" fill="#fff"><path d="M0 2.300 6.800 1.300v6.300H0ZM7.800 1.200 16 0v7.600H7.800ZM0 8.500h6.800v6.300L0 13.800ZM7.800 8.500H16V16l-8.200-1.200Z" /></svg>
      </button>
      <div className="flex h-10 w-[344px] items-center border border-[#c9c9c9] bg-[#f2f2f2] pl-[11px] text-[#444]">
        <svg viewBox="0 0 16 16" className="size-4 shrink-0" fill="none" stroke="#222" strokeWidth="1.300"><circle cx="10" cy="6" r="5.200" /><path d="M6.300 9.700.8 15.200" /></svg>
        <input aria-label="Type here to search" placeholder="Type here to search" className="ml-3 min-w-0 flex-1 bg-transparent text-[14px] outline-none placeholder:text-[#444]" />
      </div>
      <button type="button" aria-label="Cortana" className="flex w-12 justify-center"><svg viewBox="0 0 16 16" className="size-4" fill="none" stroke="#fff" strokeWidth="2"><circle cx="8" cy="8" r="7" /></svg></button>
      <button type="button" aria-label="Task View" className="flex w-[49px] justify-center"><svg viewBox="0 0 16 16" className="size-4" fill="none" stroke="#fff"><path d="M.5 0v2.500h10V0M.5 4.500h10v7H.500ZM.5 16v-2.500h10V16M14.500 0v3M14.500 8v8" /><path d="M13 4h3v3h-3Z" fill="#fff" stroke="none" /></svg></button>
      {apps.map((a) => (
        <button key={a.name} type="button" aria-label={a.name} className={`relative flex h-10 shrink-0 items-center justify-center ${a.slot} ${a.name === "MISA" ? "bg-[#4a5d66]" : ""}`}>
          {a.icon}
          <span className={`absolute bottom-0 left-1/2 h-0.5 -translate-x-1/2 ${a.bar}`} />
        </button>
      ))}
      <div className="flex flex-1 items-center justify-end text-[11px]">
        <svg viewBox="0 0 12 7" className="h-[7px] w-3" fill="none" stroke="#fff" strokeWidth="1.300"><path d="m.5 6.500 5.500-5.500 5.500 5.500" /></svg>
        <svg viewBox="0 0 16 16" className="ml-2.5 size-4"><rect width="16" height="16" rx="1" fill="#c8dbe8" /><circle cx="8" cy="8" r="6" fill="#fff" stroke="#1d6ea6" strokeWidth="1.400" /><path d="M8 14V9M8 11c-4 0-5-4-2-5 0-3 4-3 4 0 3 1 2 5-2 5" fill="none" stroke="#1d6ea6" strokeWidth="1.200" /></svg>
        <svg viewBox="0 0 16 14" className="ml-2 h-3.5 w-4" fill="none" stroke="#fff" strokeWidth="1.200"><path d="M4.500 1.500h11v8h-11ZM10 10v3M6 13.200h8M1 1v4h3V1M2.500 5v8h2" /></svg>
        <svg viewBox="0 0 16 14" className="ml-2 h-3.5 w-4" fill="none" stroke="#fff"><path d="M.5 4.500h2.500l3.500-3v11L3 9.500H.500ZM8.500 5c1 1 1 3 0 4M10.500 3c2 1.500 2 4 1 5" /><circle cx="12" cy="10" r="3.500" fill="#e02020" stroke="none" /><path d="m10.500 8.500 3 3m0-3-3 3" /></svg>
        <span className="ml-2.5 w-6 text-[11px]">ENG</span>
        <div className="ml-3 w-[58px] text-center text-[11px] leading-[18px] whitespace-nowrap"><div>9:36 AM</div><div>15/12/2020</div></div>
        <button type="button" aria-label="Thông báo hệ thống" className="relative mr-[22px] ml-[17px]">
          <svg viewBox="0 0 20 18" className="h-[18px] w-5" fill="none" stroke="#fff" strokeWidth="1.300"><path d="M1 1h16v12h-9l-3.500 3.500V13H1ZM4 4.500h10M4 7h10M4 9.500h6" /></svg>
          <span className="absolute -right-2 -bottom-2 flex size-4 items-center justify-center rounded-full border border-[#777] bg-[#26333b] text-[11px]">2</span>
        </button>
      </div>
    </footer>
  );
}

export default function App() {
  return (
    <div className={`relative flex h-screen min-h-[768px] flex-col overflow-hidden bg-[#cddcf1] text-black ${UI}`}>
      <TitleBar />
      <MenuBar />
      <ToolStrip />
      <div className="flex min-h-0 flex-1">
        <Sidebar />
        <main className={`flex min-w-0 flex-1 flex-col text-[11px] ${ARIAL}`}>
          <FilterPanel />
          <VoucherGrid />
          <DetailGrid />
        </main>
      </div>
      <StatusBar />
      <Taskbar />
      <VoucherDialog />
    </div>
  );
}
